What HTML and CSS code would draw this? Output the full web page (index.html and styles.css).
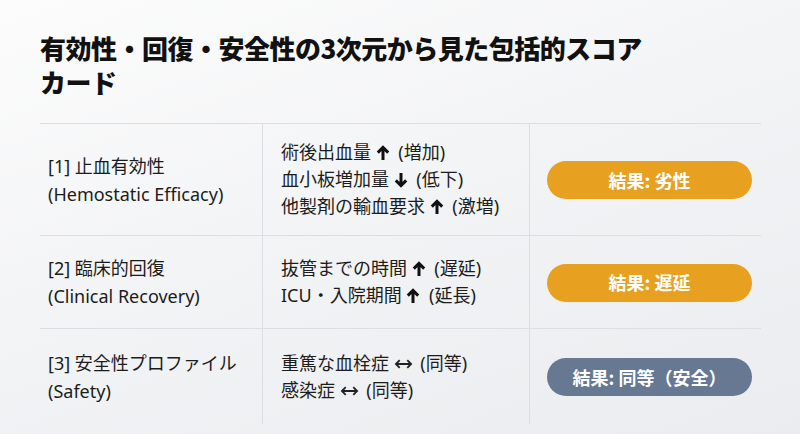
FILE: index.html
```html
<!DOCTYPE html>
<html lang="ja">
<head>
<meta charset="utf-8">
<link rel="stylesheet" href="styles.css">
</head>
<body>
<div class="page">
  <h1 class="title">有効性・回復・安全性の3次元から見た包括的スコアカード</h1>
  <div class="table">
    <div class="cell c1">
      <div>[1] 止血有効性</div>
      <div>(Hemostatic Efficacy)</div>
    </div>
    <div class="cell c2">
      <div>術後出血量 <svg class="ar" viewBox="0 0 14 16"><path d="M7 15V2.5M1.8 7.6L7 2.4l5.2 5.2"/></svg> (増加)</div>
      <div>血小板増加量 <svg class="ar" viewBox="0 0 14 16"><path d="M7 1V13.5M1.8 8.4L7 13.6l5.2-5.2"/></svg> (低下)</div>
      <div>他製剤の輸血要求 <svg class="ar" viewBox="0 0 14 16"><path d="M7 15V2.5M1.8 7.6L7 2.4l5.2 5.2"/></svg> (激増)</div>
    </div>
    <div class="cell c3"><span class="badge warn">結果: 劣性</span></div>

    <div class="cell c1">
      <div>[2] 臨床的回復</div>
      <div>(Clinical Recovery)</div>
    </div>
    <div class="cell c2">
      <div>抜管までの時間 <svg class="ar" viewBox="0 0 14 16"><path d="M7 15V2.5M1.8 7.6L7 2.4l5.2 5.2"/></svg> (遅延)</div>
      <div>ICU・入院期間 <svg class="ar" viewBox="0 0 14 16"><path d="M7 15V2.5M1.8 7.6L7 2.4l5.2 5.2"/></svg> (延長)</div>
    </div>
    <div class="cell c3"><span class="badge warn">結果: 遅延</span></div>

    <div class="cell c1 last">
      <div>[3] 安全性プロファイル</div>
      <div>(Safety)</div>
    </div>
    <div class="cell c2 last">
      <div>重篤な血栓症 <svg class="lr" viewBox="0 0 20 14"><path d="M2 7h16M6 3L2 7l4 4M14 3l4 4-4 4"/></svg> (同等)</div>
      <div>感染症 <svg class="lr" viewBox="0 0 20 14"><path d="M2 7h16M6 3L2 7l4 4M14 3l4 4-4 4"/></svg> (同等)</div>
    </div>
    <div class="cell c3 last"><span class="badge safe">結果: 同等（安全）</span></div>
  </div>
</div>
</body>
</html>
```
FILE: styles.css
```css
html, body {
  margin: 0;
  padding: 0;
}
body {
  width: 800px;
  height: 434px;
  overflow: hidden;
  background: linear-gradient(160deg, #fcfcfc 0%, #f2f3f5 50%, #eaecef 100%);
  font-family: "Noto Sans", "Noto Sans CJK JP", sans-serif;
  color: #1c1c1c;
}
.page {
  padding: 31px 39px 0 40px;
}
.title {
  margin: 0;
  width: 620px;
  font-family: "Noto Sans CJK JP", sans-serif;
  font-weight: 900;
  font-size: 26px;
  line-height: 34px;
  color: #111;
  letter-spacing: -0.5px;
}
.table {
  margin-top: 24px;
  display: grid;
  grid-template-columns: 223px 267px 231px;
  grid-template-rows: 112px 93px 95px;
  border-top: 1px solid #dcdee2;
}
.cell {
  display: flex;
  flex-direction: column;
  justify-content: center;
  border-bottom: 1px solid #dcdee2;
  font-size: 18px;
  line-height: 27px;
}
.cell.last {
  border-bottom: none;
}
.c1 {
  padding-left: 8px;
  border-right: 1px solid #dcdee2;
  line-height: 28px;
}
.c2 {
  padding-left: 18px;
  border-right: 1px solid #dcdee2;
}
.c3 {
  padding-left: 17px;
  align-items: flex-start;
}
.ar {
  width: 14px;
  height: 16px;
  vertical-align: -2px;
  fill: none;
  stroke: #111;
  stroke-width: 3;
  margin: 0 4px 0 0;
}
.lr {
  width: 19px;
  height: 14px;
  vertical-align: -1px;
  fill: none;
  stroke: #222;
  stroke-width: 1.9;
  margin: 0 3px 0 0;
}
.badge {
  display: flex;
  align-items: center;
  justify-content: center;
  width: 205px;
  height: 38px;
  border-radius: 19px;
  color: #fff;
  font-family: "Noto Sans CJK JP", sans-serif;
  font-weight: 700;
  font-size: 18px;
  margin-top: 1px;
}
.warn {
  background: #e8a020;
}
.safe {
  background: #667892;
}
```
